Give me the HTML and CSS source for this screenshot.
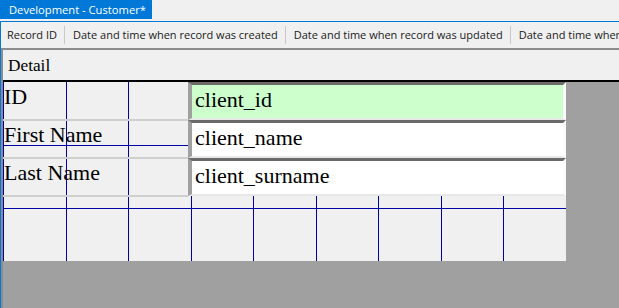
FILE: index.html
```html
<!DOCTYPE html>
<html lang="en">
<head>
  <meta charset="UTF-8">
  <title>Development - Customer*</title>
  <link rel="stylesheet" href="styles.css">
</head>
<body>
  <div class="tabbar">
    <div class="tab">Development - Customer*</div>
  </div>
  <div class="doc">
    <div class="toolbar">
      <span class="tool">Record ID</span>
      <span class="tool">Date and time when record was created</span>
      <span class="tool">Date and time when record was updated</span>
      <span class="tool">Date and time when record was deleted</span>
    </div>
    <div class="designer">
      <div class="section-head">Detail</div>
      <div class="canvas">
        <div class="row">
          <div class="label">ID</div>
          <div class="field key">client_id</div>
        </div>
        <div class="row">
          <div class="label">First Name</div>
          <div class="field">client_name</div>
        </div>
        <div class="row">
          <div class="label">Last Name</div>
          <div class="field">client_surname</div>
        </div>
      </div>
    </div>
  </div>
</body>
</html>
```

FILE: styles.css
```css
html, body {
  margin: 0;
  width: 619px;
  height: 308px;
  overflow: hidden;
}
body {
  background: #f0f0f0;
  font-family: 'Segoe UI', 'Open Sans', sans-serif;
  font-size: 11px;
  color: #1a1a1a;
}
.tabbar {
  height: 21px;
  border-bottom: 1px solid #0078d7;
}
.tab {
  display: inline-block;
  width: 152px;
  height: 19px;
  line-height: 20px;
  padding-left: 9px;
  box-sizing: border-box;
  background: #0078d7;
  color: #fff;
  font-size: 11.2px;
  white-space: nowrap;
}
.doc {
  border-left: 1px solid #0078d7;
  height: 286px;
}
.toolbar {
  display: flex;
  height: 26px;
  align-items: center;
  white-space: nowrap;
  overflow: hidden;
}
.tool {
  flex: none;
  padding: 0 7px 0 6px;
  line-height: 18px;
  border-right: 1px solid #c8c8c8;
}
.tool + .tool {
  padding-left: 8px;
}
.designer {
  border-top: 2px solid #8c8c8c;
  border-left: 2px solid #8c8c8c;
  background: #a0a0a0;
  height: 258px;
}
.section-head {
  height: 32px;
  padding-left: 5px;
  background: #f0f0f0;
  border-bottom: 2px solid #000;
  box-sizing: border-box;
  font-family: 'Liberation Serif', serif;
  font-size: 17.3px;
  line-height: 32px;
  color: #000;
}
.canvas {
  width: 563px;
  height: 179px;
  background-color: #f0f0f0;
  background-image:
    linear-gradient(to right, transparent 62px, #0000a8 62px, #0000a8 63px, transparent 63px, transparent 124px, #0000a8 124px, #0000a8 125px),
    linear-gradient(to bottom, transparent 63px, #0000a8 63px, #0000a8 64px, transparent 64px, transparent 126px, #0000a8 126px, #0000a8 127px, transparent 127px);
  background-size: 125px 100%, 100% 100%;
  background-position: 1px 0, 0 0;
  background-repeat: repeat-x, no-repeat;
  font-family: 'Liberation Serif', serif;
  font-size: 22px;
  color: #000;
}
.row {
  display: grid;
  grid-template-columns: 185px 378px;
  height: 38px;
}
.label {
  padding: 2px 0 0 1px;
  box-shadow: 0 2px 0 #cfcfcf;
  margin-bottom: 1px;
  white-space: nowrap;
}
.field {
  background: #fff;
  border-top: 3px solid #6a6a6a;
  border-left: 4px solid #a0a0a0;
  border-right: 3px solid #fbfbfb;
  border-bottom: 2px solid #e8e8e8;
  padding: 2px 0 0 3px;
  box-sizing: border-box;
  white-space: nowrap;
}
.field.key {
  background: #ccffcc;
}
```
